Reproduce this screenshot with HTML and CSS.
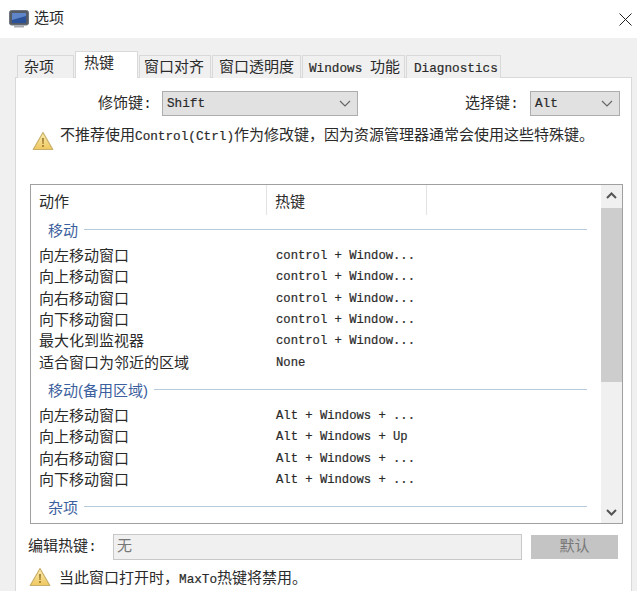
FILE: index.html
```html
<!DOCTYPE html>
<html lang="zh">
<head>
<meta charset="utf-8">
<title>选项</title>
<link rel="stylesheet" href="styles.css">
</head>
<body>
<svg class="defs" width="0" height="0" aria-hidden="true">
  <defs>
    <linearGradient id="warn" x1="0" y1="0" x2="0" y2="1">
      <stop offset="0" stop-color="#fbeeb4"/>
      <stop offset="1" stop-color="#efc75e"/>
    </linearGradient>
    <symbol id="warning" viewBox="0 0 22 20">
      <path d="M11 1.5 L20.8 18.5 H1.2 Z" fill="url(#warn)" stroke="#c9b06a" stroke-width="1.2" stroke-linejoin="round"/>
      <path d="M9.9 7 H12.1 L11.7 13 H10.3 Z" fill="#a98a3a"/>
      <rect x="10" y="14" width="2" height="2" fill="#a98a3a"/>
    </symbol>
  </defs>
</svg>
<div class="window">
  <header class="titlebar">
    <svg class="app-icon" width="20" height="18" viewBox="0 0 20 18">
      <rect x="0.5" y="0.5" width="19" height="14.5" rx="2" fill="#565c66" stroke="#6f757e"/>
      <rect x="3" y="3" width="14" height="10" fill="#2b5299"/>
      <path d="M3 3 H17 V6 L3 10 Z" fill="#5f86c8"/>
      <rect x="5" y="15.5" width="10" height="2" fill="#a8acb2"/>
    </svg>
    <span class="title">选项</span>
    <svg class="close" width="13" height="13" viewBox="0 0 13 13">
      <path d="M0.5 0.5 L12.5 12.5 M12.5 0.5 L0.5 12.5" stroke="#222" stroke-width="1" fill="none"/>
    </svg>
  </header>
  <main class="body">
    <nav class="tabs">
      <div class="tab tab-misc">杂项</div>
      <div class="tab tab-active">热键</div>
      <div class="tab tab-snap">窗口对齐</div>
      <div class="tab tab-opacity">窗口透明度</div>
      <div class="tab tab-win"><span class="latin">Windows </span>功能</div>
      <div class="tab tab-diag"><span class="latin">Diagnostics</span></div>
    </nav>
    <section class="panel">
      <div class="keys">
        <label class="key-label key-label-mod">修饰键:</label>
        <div class="combo combo-mod"><span>Shift</span><svg class="chev" width="12" height="7" viewBox="0 0 12 7"><path d="M1 1 L6 6 L11 1" fill="none" stroke="#666" stroke-width="1.2"/></svg></div>
        <label class="key-label key-label-sel">选择键:</label>
        <div class="combo combo-sel"><span>Alt</span><svg class="chev" width="12" height="7" viewBox="0 0 12 7"><path d="M1 1 L6 6 L11 1" fill="none" stroke="#666" stroke-width="1.2"/></svg></div>
      </div>
      <div class="notice">
        <svg class="warn-icon warn-top" width="22" height="20"><use href="#warning"/></svg>
        <p>不推荐使用<span class="latin">Control(Ctrl)</span>作为修改键，因为资源管理器通常会使用这些特殊键。</p>
      </div>
      <div class="listbox">
        <div class="list-content">
          <div class="list-head">
            <div class="col col-action">动作</div>
            <div class="col col-key">热键</div>
            <div class="col col-rest"></div>
          </div>
          <div class="group group-first"><span>移动</span><i></i></div>
          <div class="row"><span>向左移动窗口</span><code>control + Window...</code></div>
          <div class="row"><span>向上移动窗口</span><code>control + Window...</code></div>
          <div class="row"><span>向右移动窗口</span><code>control + Window...</code></div>
          <div class="row"><span>向下移动窗口</span><code>control + Window...</code></div>
          <div class="row"><span>最大化到监视器</span><code>control + Window...</code></div>
          <div class="row"><span>适合窗口为邻近的区域</span><code>None</code></div>
          <div class="group"><span>移动(备用区域)</span><i></i></div>
          <div class="row"><span>向左移动窗口</span><code>Alt + Windows + ...</code></div>
          <div class="row"><span>向上移动窗口</span><code>Alt + Windows + Up</code></div>
          <div class="row"><span>向右移动窗口</span><code>Alt + Windows + ...</code></div>
          <div class="row"><span>向下移动窗口</span><code>Alt + Windows + ...</code></div>
          <div class="group group-last"><span>杂项</span><i></i></div>
        </div>
        <div class="scrollbar">
          <svg class="arrow" width="21" height="23" viewBox="0 0 21 23"><path d="M6 13 L10.5 8.5 L15 13" fill="none" stroke="#555" stroke-width="2"/></svg>
          <div class="track"><div class="thumb"></div></div>
          <svg class="arrow" width="21" height="22" viewBox="0 0 21 22"><path d="M6 9 L10.5 13.5 L15 9" fill="none" stroke="#555" stroke-width="2"/></svg>
        </div>
      </div>
      <div class="edit">
        <label>编辑热键:</label>
        <div class="input">无</div>
        <div class="button">默认</div>
      </div>
      <div class="notice notice-bottom">
        <svg class="warn-icon" width="22" height="20"><use href="#warning"/></svg>
        <p>当此窗口打开时，<span class="latin">MaxTo</span>热键将禁用。</p>
      </div>
    </section>
  </main>
</div>
</body>
</html>
```

FILE: styles.css
```css
* { box-sizing: border-box; }
html, body { margin: 0; height: 100%; }
body {
  width: 637px;
  height: 591px;
  overflow: hidden;
  background: #fff;
  color: #2a2a2a;
  font-family: "Liberation Mono", "Noto Sans CJK SC", monospace;
  font-size: 15px;
}
.defs { position: absolute; }
.window { display: flex; flex-direction: column; height: 591px; }
.latin { font-size: 12.7px; -webkit-text-stroke: 0.2px #2a2a2a; }

.titlebar {
  display: flex;
  align-items: center;
  height: 38px;
  flex: none;
  padding: 0 5px 0 9px;
  background: #fff;
}
.app-icon { margin-right: 5px; }
.title { font-size: 15px; line-height: 20px; margin-top: 2px; }
.close { margin-left: auto; }

.body {
  flex: 1;
  display: flex;
  flex-direction: column;
  min-height: 0;
  padding: 14px 5px 0 15px;
  background: #f0f0f0;
}

.tabs {
  display: flex;
  align-items: flex-end;
  height: 26px;
  padding-left: 2px;
  flex: none;
  position: relative;
  z-index: 1;
  margin-bottom: -1px;
}
.tab {
  height: 23px;
  line-height: 25px;
  background: #f0f0f0;
  border: 1px solid #d9d9d9;
  border-bottom: none;
  margin-right: 1px;
  font-size: 15px;
  white-space: nowrap;
}
.tab-misc { width: 57px; padding-left: 6px; }
.tab-active {
  width: 63px;
  height: 27px;
  padding-left: 8px;
  line-height: 26px;
  background: #fff;
}
.tab-snap { width: 72px; padding-left: 4px; }
.tab-opacity { width: 89px; padding-left: 6px; }
.tab-win { width: 103px; padding-left: 6px; }
.tab-diag { width: 95px; padding-left: 7px; margin-right: 0; }

.panel {
  flex: 1;
  min-height: 0;
  background: #fff;
  border: 1px solid #d9d9d9;
  border-bottom: none;
  padding: 13px 8px 0 14px;
}

.keys { display: flex; align-items: center; height: 25px; }
.key-label { font-size: 15px; white-space: nowrap; flex: none; padding-bottom: 4px; }
.key-label-mod { margin-left: 68px; width: 64px; }
.key-label-sel { margin-left: 107px; width: 65px; }
.combo {
  display: flex;
  flex: none;
  align-items: center;
  justify-content: space-between;
  height: 25px;
  padding: 0 6px 0 4px;
  background: #e1e1e1;
  border: 1px solid #adadad;
  font-size: 12.7px;
  -webkit-text-stroke: 0.2px #2a2a2a;
}
.combo-mod { width: 196px; }
.combo-sel { width: 90px; }

.notice { display: flex; align-items: flex-start; height: 68px; padding-top: 11px; }
.notice p {
  margin: 0;
  font-size: 15px;
  line-height: 20px;
  white-space: nowrap;
}
.warn-icon { flex: none; }
.warn-top { margin: 4px 6px 0 2px; }
.notice-bottom { height: 20px; align-items: center; margin-top: 8px; padding-top: 0; }
.notice-bottom .warn-icon { margin: 0 8px 0 -1px; }
.notice-bottom p { margin-top: 6px; }

.listbox {
  display: flex;
  width: 593px;
  height: 340px;
  border: 1px solid #a0a0a0;
  background: #fff;
}
.list-content { flex: 1; min-width: 0; overflow: hidden; }
.list-head { display: flex; height: 30px; }
.col {
  font-size: 15px;
  line-height: 38px;
  padding-left: 8px;
  border-right: 1px solid #e3e3e3;
}
.col-action { width: 236px; }
.col-key { width: 160px; }
.col-rest { border-right: none; }

.group {
  display: flex;
  align-items: center;
  height: 32px;
  padding: 3px 0 0 17px;
  color: #3c5f9e;
  font-family: "Liberation Sans", "Noto Sans CJK SC", sans-serif;
  font-size: 15px;
  margin-right: 14px;
}
.group-first { height: 29.4px; padding-top: 0; }
.group-last { padding-top: 2px; }
.group i { flex: 1; height: 1px; margin-left: 6px; background: #b7cbdc; }
.row {
  display: flex;
  height: 21.33px;
  align-items: center;
  padding-left: 8px;
  font-size: 15px;
  white-space: nowrap;
}
.row span { width: 236px; flex: none; }
.row code {
  font-family: inherit;
  font-size: 12.2px;
  padding: 2px 0 0 1px;
  -webkit-text-stroke: 0.2px #2a2a2a;
}

.scrollbar {
  width: 21px;
  flex: none;
  display: flex;
  flex-direction: column;
  background: #f0f0f0;
}
.arrow { flex: none; display: block; }
.track { flex: 1; }
.thumb { height: 174px; background: #cdcdcd; }

.edit { display: flex; align-items: center; height: 25px; margin-top: 10px; margin-left: -2px; }
.edit label { width: 85px; font-size: 15px; white-space: nowrap; padding-bottom: 3px; }
.input {
  width: 409px;
  height: 26px;
  line-height: 26px;
  padding-left: 3px;
  font-size: 15px;
  color: #777;
  background: #f0f0f0;
  border: 1px solid #c8c8c8;
}
.button {
  width: 87px;
  height: 24px;
  line-height: 26px;
  margin-left: 9px;
  text-align: center;
  font-size: 15px;
  color: #777;
  background: #c4c4c4;
}
```
